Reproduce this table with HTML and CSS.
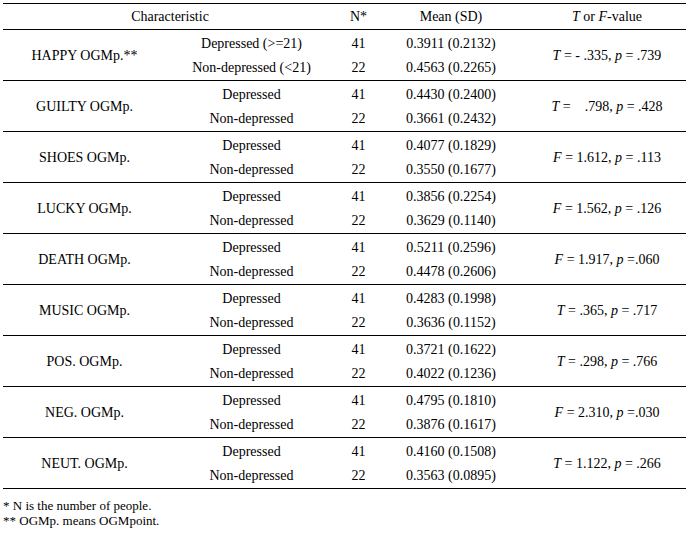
FILE: index.html
```html
<!DOCTYPE html>
<html>
<head>
<meta charset="utf-8">
<link rel="stylesheet" href="styles.css">
</head>
<body>
<div class="table">
  <div class="row head">
    <div class="c-char">Characteristic</div>
    <div class="c-n">N*</div>
    <div class="c-mean">Mean (SD)</div>
    <div class="c-t"><span><i>T</i> or <i>F</i>-value</span></div>
  </div>

  <div class="row group">
    <div class="name">HAPPY OGMp.**</div>
    <div class="sub r1">Depressed (&gt;=21)</div>
    <div class="n r1">41</div>
    <div class="mean r1">0.3911 (0.2132)</div>
    <div class="stat"><span><i>T</i> = - .335, <i>p</i> = .739</span></div>
    <div class="sub r2">Non-depressed (&lt;21)</div>
    <div class="n r2">22</div>
    <div class="mean r2">0.4563 (0.2265)</div>
  </div>

  <div class="row group">
    <div class="name">GUILTY OGMp.</div>
    <div class="sub r1">Depressed</div>
    <div class="n r1">41</div>
    <div class="mean r1">0.4430 (0.2400)</div>
    <div class="stat"><span class="pre"><i>T</i> =    .798, <i>p</i> = .428</span></div>
    <div class="sub r2">Non-depressed</div>
    <div class="n r2">22</div>
    <div class="mean r2">0.3661 (0.2432)</div>
  </div>

  <div class="row group">
    <div class="name">SHOES OGMp.</div>
    <div class="sub r1">Depressed</div>
    <div class="n r1">41</div>
    <div class="mean r1">0.4077 (0.1829)</div>
    <div class="stat"><span><i>F</i> = 1.612, <i>p</i> = .113</span></div>
    <div class="sub r2">Non-depressed</div>
    <div class="n r2">22</div>
    <div class="mean r2">0.3550 (0.1677)</div>
  </div>

  <div class="row group">
    <div class="name">LUCKY OGMp.</div>
    <div class="sub r1">Depressed</div>
    <div class="n r1">41</div>
    <div class="mean r1">0.3856 (0.2254)</div>
    <div class="stat"><span><i>F</i> = 1.562, <i>p</i> = .126</span></div>
    <div class="sub r2">Non-depressed</div>
    <div class="n r2">22</div>
    <div class="mean r2">0.3629 (0.1140)</div>
  </div>

  <div class="row group">
    <div class="name">DEATH OGMp.</div>
    <div class="sub r1">Depressed</div>
    <div class="n r1">41</div>
    <div class="mean r1">0.5211 (0.2596)</div>
    <div class="stat"><span><i>F</i> = 1.917, <i>p</i> =.060</span></div>
    <div class="sub r2">Non-depressed</div>
    <div class="n r2">22</div>
    <div class="mean r2">0.4478 (0.2606)</div>
  </div>

  <div class="row group">
    <div class="name">MUSIC OGMp.</div>
    <div class="sub r1">Depressed</div>
    <div class="n r1">41</div>
    <div class="mean r1">0.4283 (0.1998)</div>
    <div class="stat"><span><i>T</i> = .365, <i>p</i> = .717</span></div>
    <div class="sub r2">Non-depressed</div>
    <div class="n r2">22</div>
    <div class="mean r2">0.3636 (0.1152)</div>
  </div>

  <div class="row group">
    <div class="name">POS. OGMp.</div>
    <div class="sub r1">Depressed</div>
    <div class="n r1">41</div>
    <div class="mean r1">0.3721 (0.1622)</div>
    <div class="stat"><span><i>T</i> = .298, <i>p</i> = .766</span></div>
    <div class="sub r2">Non-depressed</div>
    <div class="n r2">22</div>
    <div class="mean r2">0.4022 (0.1236)</div>
  </div>

  <div class="row group">
    <div class="name">NEG. OGMp.</div>
    <div class="sub r1">Depressed</div>
    <div class="n r1">41</div>
    <div class="mean r1">0.4795 (0.1810)</div>
    <div class="stat"><span><i>F</i> = 2.310, <i>p</i> =.030</span></div>
    <div class="sub r2">Non-depressed</div>
    <div class="n r2">22</div>
    <div class="mean r2">0.3876 (0.1617)</div>
  </div>

  <div class="row group last">
    <div class="name">NEUT. OGMp.</div>
    <div class="sub r1">Depressed</div>
    <div class="n r1">41</div>
    <div class="mean r1">0.4160 (0.1508)</div>
    <div class="stat"><span><i>T</i> = 1.122, <i>p</i> = .266</span></div>
    <div class="sub r2">Non-depressed</div>
    <div class="n r2">22</div>
    <div class="mean r2">0.3563 (0.0895)</div>
  </div>
</div>

<div class="notes">
  <div>* N is the number of people.</div>
  <div>** OGMp. means OGMpoint.</div>
</div>
</body>
</html>
```

FILE: styles.css
```css
html, body {
  margin: 0;
  padding: 0;
  background: #fff;
  overflow: hidden;
}

body {
  font-family: "Liberation Serif", "Times New Roman", serif;
  color: #000;
  width: 686px;
  height: 534px;
}

.table {
  margin: 3px 0 0 3px;
  width: 689px;
  font-size: 14px;
}

.row {
  display: grid;
  grid-template-columns: 163px 171px 43px 142px 170px;
  border-top: 1px solid #000;
  text-align: center;
}

.head {
  grid-template-rows: 25px;
  align-items: center;
  line-height: 16px;
}

.head .c-char {
  grid-column: 1 / 3;
}

.group {
  grid-template-rows: 24px 24px;
  padding-top: 2px;
  line-height: 16px;
}

.group > div {
  display: flex;
  align-items: center;
  justify-content: center;
}

.group .name {
  grid-column: 1;
  grid-row: 1 / 3;
}

.group .sub { grid-column: 2; }
.group .n { grid-column: 3; }
.group .mean { grid-column: 4; }

.group .stat {
  grid-column: 5;
  grid-row: 1 / 3;
}

.group .r1 { grid-row: 1; }
.group .r2 { grid-row: 2; }

.pre {
  white-space: pre;
}

.last {
  border-bottom: 1px solid #000;
}

.notes {
  margin: 9px 0 0 3px;
  font-size: 13px;
  line-height: 15px;
}
```
